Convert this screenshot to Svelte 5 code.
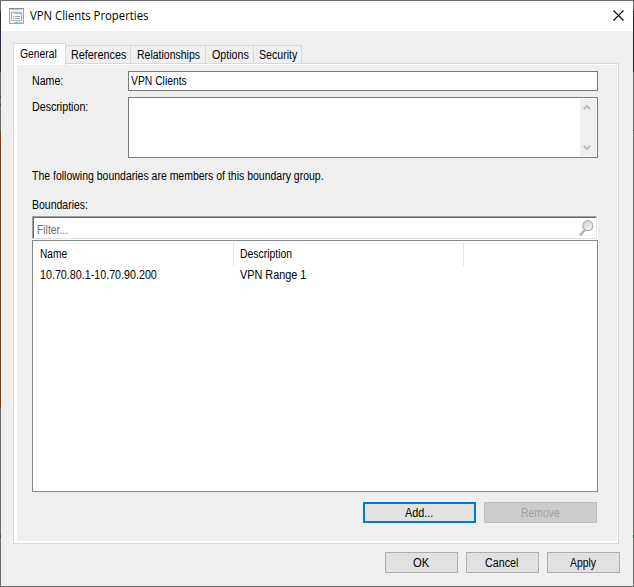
<script>
  const tabs = [
    { label: 'General', width: 53, text: 37, active: true },
    { label: 'References', width: 65, text: 55 },
    { label: 'Relationships', width: 75, text: 63 },
    { label: 'Options', width: 48, text: 36.5 },
    { label: 'Security', width: 48, text: 38 }
  ];

  // Condense or widen a label so that it takes exactly the given width.
  function fit(node, width) {
    const natural = node.offsetWidth;
    const scale = width / natural;
    node.style.transform = `scaleX(${scale})`;
    node.style.marginRight = `${width - natural}px`;
  }
</script>

<div class="window">
  <header class="titlebar">
    <svg class="app-icon" width="16" height="17" viewBox="0 0 16 17">
      <rect x="0.5" y="0.5" width="14" height="15" fill="#eef0f1" stroke="#a3a9ae" />
      <path d="M0 0.5H15" stroke="#868d93" />
      <path d="M1 1.5H14" stroke="#c4c8cb" />
      <path d="M11 1.5h1M13 1.5h1" stroke="#fff" />
      <path d="M2.5 12.5V4.5H5.5V5.5H12.5V12.5Z" fill="#fff" stroke="#a9b0b6" />
      <path d="M6.5 5V4.5H9M10 4.5H12.5" fill="none" stroke="#a9b0b6" />
      <path d="M4 8.5h1M6 8.5h5M4 10.5h1M6 10.5h5" stroke="#a0a8af" />
      <path d="M6 14.5h3" stroke="#3cbce8" />
      <path d="M10 14.5h3" stroke="#b4babe" />
    </svg>
    <span class="t title" use:fit={118}>VPN Clients Properties</span>
    <svg class="close" width="11" height="11" viewBox="0 0 11 11">
      <path d="M0.5 0.5L10.5 10.5M10.5 0.5L0.5 10.5" stroke="#000" stroke-width="1.1" />
    </svg>
  </header>

  <nav class="tabs">
    {#each tabs as tab}
      <div class="tab" class:active={tab.active} style:width="{tab.width}px">
        <span class="t" use:fit={tab.text}>{tab.label}</span>
      </div>
    {/each}
  </nav>

  <main class="page">
    <div class="row name">
      <label for="name"><span class="t" use:fit={31}>Name:</span></label>
      <div class="input" id="name"><span class="t" use:fit={56}>VPN Clients</span></div>
    </div>
    <div class="row desc">
      <label for="desc"><span class="t" use:fit={56}>Description:</span></label>
      <div class="area" id="desc">
        <div class="scroll">
          <svg width="8" height="7" viewBox="0 0 8 7"><path d="M0.7 5.3L4 2L7.3 5.3" fill="none" stroke="#bcbcbc" stroke-width="2" /></svg>
          <svg width="8" height="7" viewBox="0 0 8 7"><path d="M0.7 1.7L4 5L7.3 1.7" fill="none" stroke="#bcbcbc" stroke-width="2" /></svg>
        </div>
      </div>
    </div>
    <div class="note"><span class="t" use:fit={292}>The following boundaries are members of this boundary group.</span></div>
    <div class="caption"><span class="t" use:fit={56}>Boundaries:</span></div>

    <div class="filter">
      <span class="t" use:fit={31}>Filter...</span>
      <svg width="15" height="17" viewBox="0 0 15 17">
        <defs>
          <linearGradient id="lens" x2="1" y2="1">
            <stop stop-color="#d2d2d2" /><stop offset="1" stop-color="#fafafa" />
          </linearGradient>
        </defs>
        <path d="M1 15.5L5.5 10.2" stroke="#a2a2a2" stroke-width="2.4" />
        <path d="M1.3 14.8L5.3 10" stroke="#d0d0d0" stroke-width="0.9" />
        <circle cx="8.9" cy="5.7" r="5" fill="url(#lens)" stroke="#b0b0b0" stroke-width="1.2" />
      </svg>
    </div>

    <div class="list">
      <div class="cols head">
        <div class="c1"><span class="t" use:fit={27}>Name</span></div>
        <div class="c2"><span class="t" use:fit={52}>Description</span></div>
      </div>
      <div class="cols">
        <div class="c1"><span class="t" use:fit={117}>10.70.80.1-10.70.90.200</span></div>
        <div class="c2"><span class="t" use:fit={66}>VPN Range 1</span></div>
      </div>
    </div>

    <div class="actions">
      <button class="primary"><span class="t" use:fit={28}>Add...</span></button>
      <button disabled><span class="t" use:fit={39}>Remove</span></button>
    </div>
  </main>

  <footer>
    <button><span class="t" use:fit={16}>OK</span></button>
    <button><span class="t" use:fit={33}>Cancel</span></button>
    <button><span class="t" use:fit={26}>Apply</span></button>
  </footer>
</div>

<style>
  .window, .window * { box-sizing: border-box; }
  .window {
    width: 634px;
    height: 587px;
    padding: 1px;
    background:
      linear-gradient(#efefef, #efefef) 1px 1px / 632px 585px no-repeat,
      linear-gradient(#6b6b6b 11px, #332f30 11px 36px, #322d4a 36px 52px, #332f30 52px 72px, #6b6b6b 72px 96px, #44444a 96px 98px, #6b6b6b 98px 104px, #44444a 104px 106px, #6b6b6b 106px 131px, #78401f 131px 408px, #6b6b6b 408px 535px, #1c641c 535px 538px, #6b6b6b 538px) 0 0 / 1px 100% no-repeat,
      linear-gradient(#6b6b6b 11px, #282828 11px 72px, #6b6b6b 72px 130px, #444 130px 131px, #6b6b6b 131px 535px, #1c641c 535px 538px, #6b6b6b 538px) 100% 0 / 1px 100% no-repeat,
      #6b6b6b;
    color: #000;
    font: 12px/14px "Liberation Sans", Arial, sans-serif;
    display: flex;
    flex-direction: column;
    overflow: hidden;
  }
  .t {
    display: inline-block;
    flex: none;
    white-space: nowrap;
    transform-origin: 0 50%;
  }
  .titlebar {
    height: 30px;
    flex: none;
    background: #fff;
    display: flex;
    align-items: center;
    padding: 0 9px 0 8px;
  }
  .app-icon { margin-right: 5px; flex: none; }
  .title { font: 12px/16px "Open Sans", "Noto Sans", sans-serif; }
  .close { margin-left: auto; margin-top: -2px; }
  .tabs {
    height: 22px;
    flex: none;
    margin: 11px 0 0 12px;
    display: flex;
    align-items: flex-end;
  }
  .tab {
    height: 19px;
    border: 1px solid #d9d9d9;
    border-width: 1px 1px 0 0;
    display: flex;
    align-items: center;
    justify-content: center;
    background: #f0f0f0;
    padding: 0 0 1px 1px;
  }
  .tab.active {
    height: 22px;
    margin-bottom: -1px;
    border-left-width: 1px;
    background: #fff;
    padding: 0 2px 2px 0;
    z-index: 1;
    position: relative;
  }
  .page {
    width: 606px;
    height: 481px;
    flex: none;
    margin-left: 12px;
    border: 1px solid #d9d9d9;
    box-shadow: inset 3px 0 #fff, inset 0 1px #fff, inset -1px 0 #fff, inset 0 -2px #fff;
    padding: 7px 20px 0 18px;
    margin-top: -1px;
  }
  .row { display: flex; }
  label { width: 96px; flex: none; padding-top: 3px; }
  .input {
    width: 470px;
    height: 20px;
    border: 1px solid #7a7a7a;
    background: #fff;
    padding: 2px;
  }
  .desc { margin-top: 6px; }
  .area {
    width: 470px;
    height: 61px;
    border: 1px solid #7a7a7a;
    background: #fff;
    display: flex;
    justify-content: flex-end;
    padding: 1px;
  }
  .scroll {
    width: 16px;
    background: #efefef;
    display: flex;
    flex-direction: column;
    justify-content: space-between;
    align-items: center;
    padding: 5px 2px 5px 0;
  }
  .note { height: 14px; margin-top: 11px; }
  .caption { height: 14px; margin-top: 15px; }
  .filter {
    width: 565px;
    height: 23px;
    margin-top: 4px;
    background: #fff;
    border: 1px solid;
    border-color: #a0a0a0 #e3e3e3 #e3e3e3 #a0a0a0;
    box-shadow: inset 1px 1px #696969, 0 1px #fff, 1px 0 #fff;
    color: #6d6d6d;
    display: flex;
    justify-content: space-between;
    padding: 6px 2px 0 4px;
  }
  .filter svg { margin-top: -3px; }
  .list {
    width: 566px;
    height: 252px;
    margin-top: 1px;
    border: 1px solid #828790;
    background: #fff;
    padding-top: 1px;
  }
  .cols { display: flex; height: 16px; padding-top: 1px; }
  .c1 { width: 201px; padding-left: 7px; }
  .c2 { width: 230px; padding-left: 6px; }
  .head { height: 24px; padding: 0; margin-bottom: 1px; }
  .head > div { border-right: 1px solid #e5e5e5; padding-top: 5px; }
  .actions {
    display: flex;
    justify-content: flex-end;
    gap: 8px;
    margin: 10px 1px 0 0;
  }
  button {
    width: 73px;
    height: 21px;
    border: 1px solid #adadad;
    background: #e1e1e1;
    color: #000;
    font: inherit;
    padding: 1px 1px 0 0;
    display: flex;
    align-items: center;
    justify-content: center;
  }
  .actions button { width: 113px; }
  .primary { border: 2px solid #0078d7; padding-right: 1px; }
  button:disabled { background: #ccc; border-color: #bfbfbf; color: #a0a0a0; }
  footer {
    display: flex;
    justify-content: flex-end;
    gap: 8px;
    padding: 8px 13px 0 0;
  }
</style>
